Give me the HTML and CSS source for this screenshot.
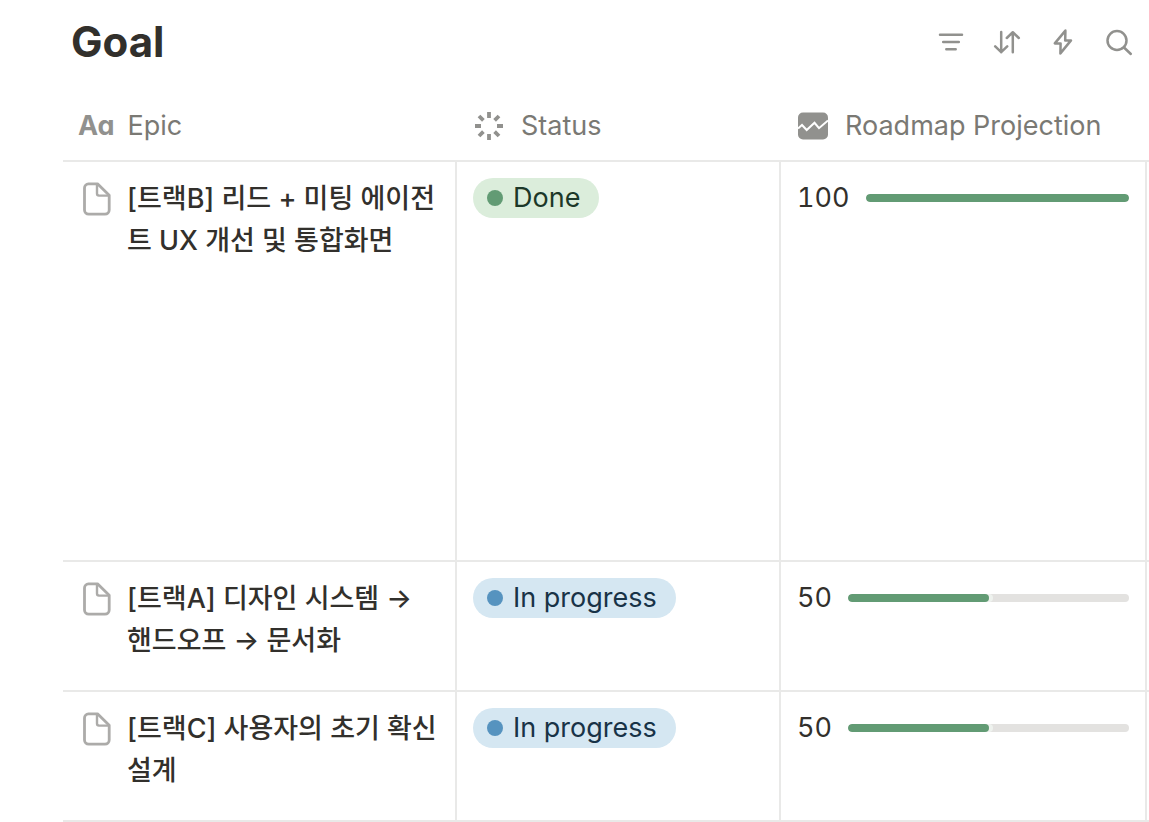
FILE: index.html
```html
<!DOCTYPE html>
<html lang="ko">
<head>
<meta charset="utf-8">
<meta name="viewport" content="width=device-width, initial-scale=1">
<title>Goal</title>
<link rel="stylesheet" href="styles.css">
</head>
<body>
<svg class="sprite" aria-hidden="true">
  <symbol id="page" viewBox="0 0 28 34">
    <path d="M5.5 1.8H14.5L26.2 13.3V28a4.2 4.2 0 0 1-4.2 4.2H5.7A4.2 4.2 0 0 1 1.5 28V6a4.2 4.2 0 0 1 4-4.2Z" fill="none" stroke="currentColor" stroke-width="2.8" stroke-linejoin="round"/>
    <path d="M14 2.5V11.6a2 2 0 0 0 2 2H25.5" fill="none" stroke="currentColor" stroke-width="2.4"/>
  </symbol>
</svg>
<main class="database">
  <header class="toolbar">
    <h1 class="title">Goal</h1>
    <div class="actions">
      <button class="action" type="button" aria-label="Filter">
        <svg class="icon" viewBox="0 0 28 28"><path d="M3 6.7H25M6.2 14H21.8M9.3 21.2H18.7"/></svg>
      </button>
      <button class="action" type="button" aria-label="Sort">
        <svg class="icon" viewBox="0 0 28 28"><path d="M8.2 4V24.2M2.2 18.4L8.2 24.2L14.2 18.4M19.8 24.2V4.2M13.8 10L19.8 4.2L25.8 10"/></svg>
      </button>
      <button class="action" type="button" aria-label="Automations">
        <svg class="icon" viewBox="0 0 28 28"><path d="M16.4 2.6L5.8 15.4H11.6L11.4 25.4L22 12.4H16.2Z"/></svg>
      </button>
      <button class="action" type="button" aria-label="Search">
        <svg class="icon" viewBox="0 0 28 28"><circle cx="12" cy="12.5" r="9.5"/><path d="M19 19.5L25.8 26"/></svg>
      </button>
    </div>
  </header>
  <table class="grid">
    <colgroup><col class="col-epic"><col class="col-status"><col><col class="col-rest"></colgroup>
    <thead>
      <tr>
        <th scope="col"><div class="heading"><span class="type-text" aria-hidden="true">Aa</span>Epic</div></th>
        <th scope="col"><div class="heading heading-wide">
          <svg class="type-icon" viewBox="0 0 30 30" aria-hidden="true"><path d="M15 1V7M15 23V29M1 15H7M23 15H29M5 5L9.4 9.4M20.6 20.6L25 25M25 5L20.6 9.4M9.4 20.6L5 25" fill="none" stroke="currentColor" stroke-width="3.8"/></svg>Status</div></th>
        <th scope="col"><div class="heading heading-wide">
          <svg class="type-icon" viewBox="0 0 30 30" aria-hidden="true"><rect x="0" y="1.5" width="30" height="27" rx="5" fill="currentColor"/><path d="M0 17.5L4 14L8.7 19L16.5 11.8L21 17.2L30 9.5" fill="none" stroke="#fff" stroke-width="2"/></svg>Roadmap Projection</div></th>
        <td></td>
      </tr>
    </thead>
    <tbody>
      <tr class="row-tall">
        <td><div class="epic"><svg class="page-icon" aria-hidden="true"><use href="#page"/></svg><span class="name">[트랙B] 리드 + 미팅 에이전트 UX 개선 및 통합화면</span></div></td>
        <td><span class="status done">Done</span></td>
        <td><div class="projection">100<div class="track" role="progressbar" aria-label="Roadmap Projection" aria-valuenow="100"><div class="fill" style="width:100%"></div></div></div></td>
        <td></td>
      </tr>
      <tr>
        <td><div class="epic"><svg class="page-icon" aria-hidden="true"><use href="#page"/></svg><span class="name">[트랙A] 디자인 시스템 → 핸드오프 → 문서화</span></div></td>
        <td><span class="status doing">In progress</span></td>
        <td><div class="projection">50<div class="track" role="progressbar" aria-label="Roadmap Projection" aria-valuenow="50"><div class="fill" style="width:50%"></div></div></div></td>
        <td></td>
      </tr>
      <tr>
        <td><div class="epic"><svg class="page-icon" aria-hidden="true"><use href="#page"/></svg><span class="name">[트랙C] 사용자의 초기 확신 설계</span></div></td>
        <td><span class="status doing">In progress</span></td>
        <td><div class="projection">50<div class="track" role="progressbar" aria-label="Roadmap Projection" aria-valuenow="50"><div class="fill" style="width:50%"></div></div></div></td>
        <td></td>
      </tr>
    </tbody>
  </table>
</main>
</body>
</html>
```
FILE: styles.css
```css
* { box-sizing: border-box; }
body {
  margin: 0;
  background: #fff;
  color: #32302c;
  font-family: Inter, "Noto Sans CJK KR", sans-serif;
  font-size: 27px;
  line-height: 40px;
}
.sprite { display: none; }
.database { padding-left: 63px; }
.toolbar {
  display: flex;
  align-items: center;
  justify-content: space-between;
  height: 92px;
  padding: 0 16px 8px 8px;
}
.title { margin: 0; font-size: 42px; font-weight: 700; line-height: 54px; }
.actions { display: flex; gap: 28px; }
.action {
  display: flex;
  padding: 0;
  border: 0;
  background: none;
  color: #91918e;
  cursor: pointer;
}
.icon {
  width: 28px;
  height: 28px;
  fill: none;
  stroke: currentColor;
  stroke-width: 2.5;
  stroke-linecap: round;
  stroke-linejoin: round;
}
.grid {
  width: 100%;
  table-layout: fixed;
  border-collapse: separate;
  border-spacing: 0;
}
.col-epic { width: 394px; }
.col-status { width: 324px; }
.col-rest { width: 2px; }
.grid th, .grid td { padding: 0; border-bottom: 2px solid #e9e9e8; }
.grid th { height: 70px; font-weight: 400; text-align: left; }
.grid tbody td {
  height: 130px;
  padding: 16px;
  border-right: 2px solid #e9e9e8;
  vertical-align: top;
}
.grid tbody .row-tall td { height: 400px; }
.grid tbody td:last-child { padding: 0; border-right: 0; }
.heading {
  display: flex;
  align-items: center;
  gap: 13px;
  padding-left: 15px;
  color: #7a7974;
  line-height: 42px;
  white-space: nowrap;
}
.heading-wide { gap: 17px; padding-left: 17px; }
.type-text {
  color: #91918e;
  font-size: 27px;
  font-weight: 700;
  font-feature-settings: "cv11";
}
.type-icon { width: 30px; height: 30px; color: #91918e; }
.epic { display: flex; gap: 16px; padding-left: 4px; }
.page-icon { flex: none; width: 28px; height: 34px; margin-top: 4px; color: #acaba9; }
.name {
  font-size: 27px;
  font-weight: 500;
  line-height: 42px;
  word-break: break-all;
}
.status {
  display: flex;
  align-items: center;
  gap: 10px;
  width: fit-content;
  height: 40px;
  padding: 0 19px 0 14px;
  border-radius: 20px;
  line-height: 42px;
}
.status::before {
  content: "";
  width: 16px;
  height: 16px;
  border-radius: 50%;
}
.done { background: #dbeddb; color: #1c3829; }
.done::before { background: #629b74; }
.doing { background: #d5e7f2; color: #183347; }
.doing::before { background: #5693bf; }
.projection {
  display: flex;
  align-items: center;
  gap: 16px;
  font-variant-numeric: tabular-nums;
}
.track {
  flex: 1;
  height: 8px;
  overflow: hidden;
  border-radius: 4px;
  background: #e3e2e0;
}
.fill {
  height: 8px;
  border-radius: 4px;
  background: #629b74;
  box-shadow: 4px 0 0 #eef2ee;
}
```
